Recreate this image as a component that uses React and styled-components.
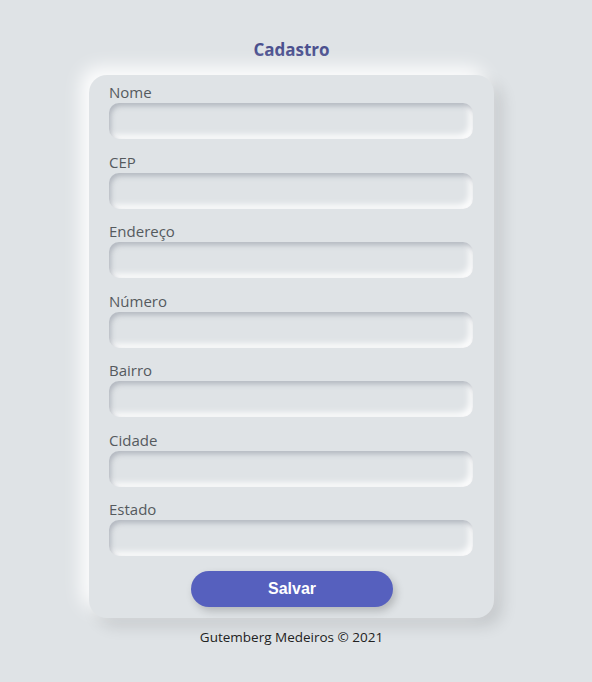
import React from "react";
import styled, { createGlobalStyle } from "styled-components";

const Global = createGlobalStyle`
  html, body { margin: 0; padding: 0; background: #dfe3e6; }
  body { font-family: "Trebuchet MS", "Open Sans", sans-serif; }
`;

const Page = styled.div`
  width: 592px;
  min-height: 682px;
  display: flex;
  flex-direction: column;
  align-items: center;
  padding: 39px 9px 0 0;
  box-sizing: border-box;
`;

const Title = styled.h1`
  margin: 0 0 14px;
  font-size: 17px;
  line-height: 22px;
  font-weight: 700;
  color: #4a4f8e;
`;

const Card = styled.form`
  width: 405px;
  box-sizing: border-box;
  padding: 9px 21px 11px 20px;
  background: #dfe3e6;
  border-radius: 18px;
  box-shadow: -8px -8px 18px rgba(255,255,255,0.95), 8px 8px 16px rgba(0,0,0,0.12);
  display: flex;
  flex-direction: column;
`;

const Field = styled.div`
  display: flex;
  flex-direction: column;
  margin-bottom: ${(p) => (p.$last ? "14.5px" : "14.5px")};
`;

const Label = styled.label`
  font-size: 15px;
  line-height: 17px;
  margin-bottom: 2px;
  color: #555a5e;
`;

const Input = styled.input`
  height: 36px;
  box-sizing: border-box;
  border: none;
  outline: none;
  border-radius: 10px;
  background: #dfe3e6;
  box-shadow: inset 2px 3px 5px rgba(160,165,175,0.7), inset -4px -4px 6px rgba(255,255,255,0.95);
  font-family: inherit;
  font-size: 15px;
  padding: 0 12px;
`;

const Button = styled.button`
  align-self: center;
  width: 202px;
  height: 36px;
  margin-left: 2px;
  border: none;
  border-radius: 18px;
  background: #5660be;
  color: #fff;
  font-family: "Liberation Sans", Arial, sans-serif;
  font-weight: 700;
  font-size: 16px;
  box-shadow: 3px 4px 8px rgba(0,0,0,0.2);
  cursor: pointer;
`;

const Footer = styled.footer`
  margin-top: 11px;
  font-size: 13.5px;
  line-height: 16px;
  color: #222;
`;

const fields = ["Nome", "CEP", "Endereço", "Número", "Bairro", "Cidade", "Estado"];

export default function App() {
  return (
    <>
      <Global />
      <Page>
        <Title>Cadastro</Title>
        <Card onSubmit={(e) => e.preventDefault()}>
          {fields.map((f, i) => (
            <Field key={f} $last={i === fields.length - 1}>
              <Label>{f}</Label>
              <Input type="text" />
            </Field>
          ))}
          <Button type="submit">Salvar</Button>
        </Card>
        <Footer>Gutemberg Medeiros © 2021</Footer>
      </Page>
    </>
  );
}
